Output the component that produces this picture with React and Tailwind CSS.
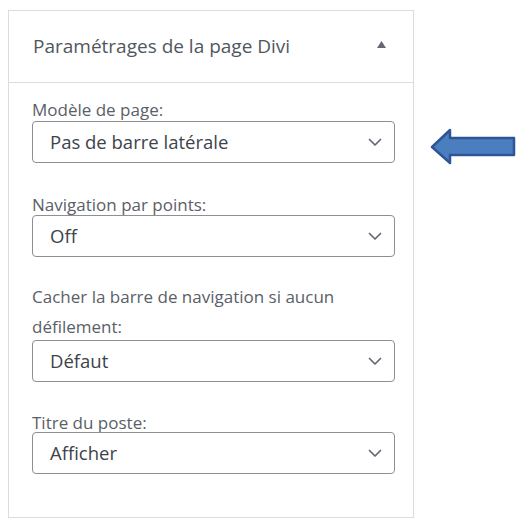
import React from "react";

const font = { fontFamily: '"Open Sans", "Noto Sans", sans-serif' };

function Chevron() {
  return (
    <svg width="14" height="9" viewBox="0 0 14 9" className="shrink-0">
      <path d="M1.5 1.5 L7 7 L12.5 1.5" fill="none" stroke="#646970" strokeWidth="1.75" strokeLinecap="round" strokeLinejoin="round" />
    </svg>
  );
}

function Select({ value, className = "" }) {
  return (
    <div className={"flex h-[42px] w-[363px] items-center justify-between rounded-[4px] border border-[#8c8f94] bg-white pl-[17px] pr-[12px] " + className}>
      <span className="text-[18.5px] leading-none text-[#3c434a]">{value}</span>
      <Chevron />
    </div>
  );
}

export default function App() {
  return (
    <div className="flex h-[528px] w-[525px] items-start bg-white" style={font}>
      <div className="ml-[8px] mt-[10px] w-[406px] border border-[#dcdcde] bg-white">
        <div className="flex h-[72px] items-center justify-between border-b border-[#dcdcde] pl-[24px] pr-[27px]">
          <span className="text-[19px] leading-none text-[#50575e]">Paramétrages de la page Divi</span>
          <svg width="9" height="7" viewBox="0 0 9 7" className="mb-[5px]">
            <path d="M4.5 0 L9 7 L0 7 Z" fill="#646970" />
          </svg>
        </div>
        <div className="flex flex-col pl-[23px] pb-[43px] pt-[16px] text-[17px] text-[#5a6067]">
          <div className="leading-[22px]">Modèle de page:</div>
          <Select value="Pas de barre latérale" />
          <div className="mt-[31px] leading-[22px]">Navigation par points:</div>
          <Select value="Off" className="-mt-[1px]" />
          <div className="mt-[25px] w-[350px] leading-[30px]">Cacher la barre de navigation si aucun défilement:</div>
          <Select value="Défaut" className="-mt-[2px]" />
          <div className="mt-[30px] leading-[22px]">Titre du poste:</div>
          <Select value="Afficher" className="-mt-[2px]" />
        </div>
      </div>
      <svg width="88" height="38" viewBox="0 0 88 38" className="ml-[16px] mt-[128px]">
        <polygon points="2,19 20,2 20,10 84,10 84,27 20,27 20,35" fill="#4a7ebf" stroke="#2f5597" strokeWidth="2.5" strokeLinejoin="round" />
      </svg>
    </div>
  );
}
